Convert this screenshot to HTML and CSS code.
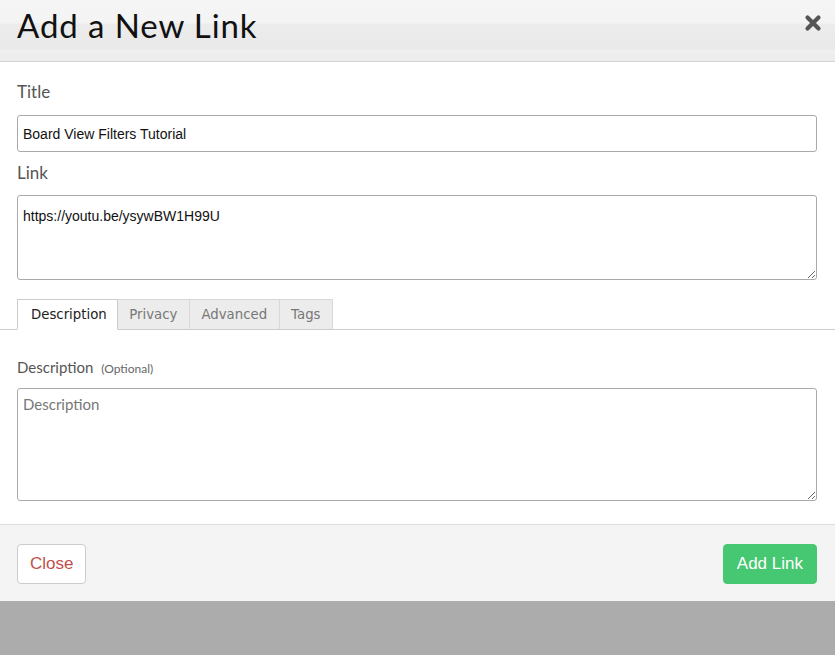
FILE: index.html
```html
<!DOCTYPE html>
<html lang="en">
<head>
  <meta charset="UTF-8" />
  <title>Add a New Link</title>
  <link rel="stylesheet" href="styles.css">
</head>
<body>
  <div class="modal">
    <div class="modal-header">
      <h2>Add a New Link</h2>
      <button class="modal-close" aria-label="Close">
        <svg viewBox="0 0 18 18" aria-hidden="true">
          <path d="M3.5 3.5l11 11M14.5 3.5l-11 11" stroke="#555" stroke-width="4.2" stroke-linecap="round"/>
        </svg>
      </button>
    </div>

    <div class="modal-body">
      <label class="field-label" for="title">Title</label>
      <input id="title" class="field" type="text" value="Board View Filters Tutorial">

      <label class="field-label link-label" for="link">Link</label>
      <textarea id="link" class="field link-area">https://youtu.be/ysywBW1H99U</textarea>
    </div>

    <!-- Tabs -->
    <div class="tabs">
      <span class="tab active">Description</span>
      <span class="tab">Privacy</span>
      <span class="tab">Advanced</span>
      <span class="tab">Tags</span>
    </div>

    <div class="tab-pane">
      <label class="desc-label" for="desc">Description <small>(Optional)</small></label>
      <textarea id="desc" class="field desc-area" placeholder="Description"></textarea>
    </div>

    <div class="modal-footer">
      <button class="btn btn-close">Close</button>
      <button class="btn btn-add">Add Link</button>
    </div>
  </div>
</body>
</html>
```

FILE: styles.css
```css
body {
  margin: 0;
  background: #acacac;
  font-family: Lato, "Open Sans", sans-serif;
}

.modal {
  background: white;
  box-shadow: 0 4px 0 #a2a2a2;
}

.modal-header {
  height: 61px;
  border-bottom: 1px solid #d2d2d2;
  background: linear-gradient(to bottom, #f5f5f5 0, #f4f4f4 23px, #ececec 24px, #e9e9e9 49px, #efefef 50px, #ececec 61px);
  display: flex;
  justify-content: space-between;
  align-items: flex-start;
  padding: 0 13px 0 17px;
}

.modal-header h2 {
  margin: 0;
  padding-top: 4px;
  font-size: 33px;
  font-weight: 400;
  letter-spacing: 0.9px;
  color: #111;
  line-height: 42px;
}

.modal-close {
  border: none;
  background: none;
  padding: 0;
  margin-top: 14px;
  width: 18px;
  height: 18px;
  cursor: pointer;
}

.modal-close svg {
  width: 18px;
  height: 18px;
  display: block;
}

.modal-body {
  padding: 20px 18px 0 17px;
}

.field-label {
  display: block;
  font-size: 17px;
  line-height: 20px;
  color: #555;
  margin-bottom: 13px;
}

.link-label {
  margin-top: 11px;
  margin-bottom: 12px;
}

.field {
  display: block;
  box-sizing: border-box;
  width: 100%;
  margin: 0;
  border: 1px solid #aaa;
  border-radius: 3px;
  background: white;
  font-family: "Liberation Sans", Arial, sans-serif;
  font-size: 14px;
  color: #111;
}

input.field {
  height: 37px;
  padding: 0 5px;
}

.link-area {
  height: 85px;
  padding: 12px 5px;
  line-height: 17px;
  resize: vertical;
}

.tabs {
  display: flex;
  margin-top: 19px;
  padding: 0 17px;
  border-bottom: 1px solid #ccc;
}

.tab {
  height: 29px;
  line-height: 30px;
  padding: 0 11.5px;
  font-family: "DejaVu Sans", Verdana, sans-serif;
  font-size: 13.3px;
  color: #777;
  background: #ececec;
  border-top: 1px solid #d8d8d8;
  border-right: 1px solid #d8d8d8;
  border-bottom: 1px solid #ccc;
  margin-bottom: -1px;
}

.tab.active {
  background: white;
  color: #222;
  padding: 0 10px 0 13px;
  border-left: 1px solid #ccc;
  border-top: 1px solid #ccc;
  border-right: 1px solid #ccc;
  border-bottom: 1px solid white;
}

.tab-pane {
  padding: 27px 18px 23px 17px;
}

.desc-label {
  display: block;
  height: 20px;
  font-size: 15px;
  line-height: 20px;
  color: #555;
  margin-bottom: 11px;
}

.desc-label small {
  font-size: 12px;
  color: #666;
  margin-left: 4px;
}

.desc-area {
  height: 113px;
  padding: 7px 5px;
  line-height: 17px;
  resize: vertical;
}

.desc-area::placeholder {
  font-family: Lato, "Open Sans", sans-serif;
  font-size: 15px;
  color: #777;
}

.modal-footer {
  background: #f4f4f4;
  border-top: 1px solid #dcdcdc;
  padding: 19px 18px 17px 17px;
  display: flex;
  justify-content: space-between;
}

.btn {
  height: 40px;
  padding: 0 12px;
  border-radius: 4px;
  font-family: "Liberation Sans", Arial, sans-serif;
  font-size: 17px;
  cursor: pointer;
}

.btn-close {
  background: white;
  border: 1px solid #ccc;
  color: #bf504e;
}

.btn-add {
  padding: 0 13px;
  background: #46c772;
  border: 1px solid #46c772;
  color: white;
}
```
